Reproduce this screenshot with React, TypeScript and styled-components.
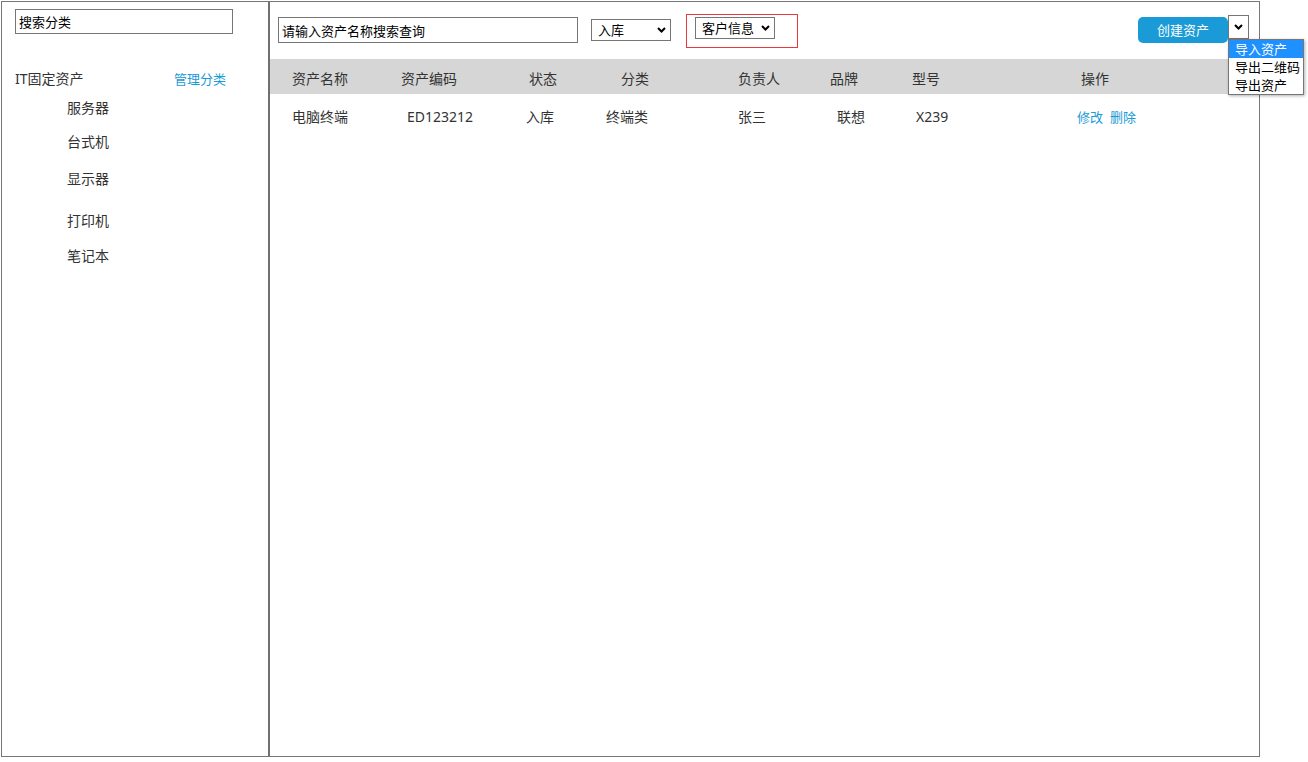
import React from "react";
import styled, { createGlobalStyle } from "styled-components";

const FONT = `"Noto Sans", "Noto Sans CJK SC", sans-serif`;

const GlobalStyle = createGlobalStyle`
  html, body { margin: 0; padding: 0; background: #fff; }
  body { font-family: ${FONT}; color: #333; }
  *, *::before, *::after { box-sizing: border-box; }
`;

const Page = styled.div`
  padding: 1px;
`;

const Frame = styled.div`
  width: 1259px;
  height: 756px;
  border: 1px solid #777;
  display: flex;
`;

const Sidebar = styled.aside`
  width: 268px;
  flex: none;
  border-right: 2px solid #707070;
  padding: 7px 0 0 13px;
  display: flex;
  flex-direction: column;
`;

const TextInput = styled.input<{ $w: number; $h: number; $mt?: number }>`
  width: ${(p) => p.$w}px;
  height: ${(p) => p.$h}px;
  margin: ${(p) => p.$mt ?? 0}px 0 0 0;
  flex: none;
  border: 1px solid #767676;
  border-radius: 0;
  padding: 0 3px;
  font: 13px/1 ${FONT};
  color: #000;
  background: #fff;
  outline: none;
`;

const CategoryHead = styled.div`
  width: 211px;
  margin-top: 35px;
  display: flex;
  justify-content: space-between;
  align-items: center;
  line-height: 20px;
  font-size: 14px;
  color: #333;
`;

const ManageLink = styled.span`
  font-size: 13px;
  color: #1a9ad6;
`;

const CategoryItem = styled.div<{ $mt: number }>`
  margin-top: ${(p) => p.$mt}px;
  padding-left: 52px;
  line-height: 20px;
  font-size: 14px;
  color: #333;
`;

const Main = styled.main`
  flex: 1;
  display: flex;
  flex-direction: column;
  min-width: 0;
`;

const Toolbar = styled.div`
  height: 57px;
  flex: none;
  display: flex;
  align-items: flex-start;
  padding: 0 10px 0 8px;
`;

const Select = styled.div<{ $ml?: number; $mt?: number }>`
  width: 80px;
  height: 22px;
  margin: ${(p) => p.$mt ?? 0}px 0 0 ${(p) => p.$ml ?? 0}px;
  flex: none;
  border: 1px solid #767676;
  background: #fff;
  display: flex;
  align-items: center;
  justify-content: space-between;
  padding: 0 4px 0 6px;
  font-size: 13px;
  line-height: 18px;
  color: #000;
`;

const HighlightBox = styled.div`
  margin: 12px 0 0 15px;
  width: 112px;
  height: 34px;
  border: 1px solid #e5393c;
  padding: 2px 0 0 8px;
  display: flex;
  align-items: flex-start;
`;

const ActionGroup = styled.div`
  margin-left: auto;
  display: flex;
  align-items: flex-start;
`;

const CreateButton = styled.button`
  margin-top: 15px;
  width: 90px;
  height: 26px;
  border: none;
  border-radius: 5px;
  background: #1a9bd7;
  color: #fff;
  font: 13px/26px ${FONT};
  padding: 0;
`;

const MenuToggle = styled.div`
  position: relative;
  margin-top: 13px;
  width: 21px;
  height: 24px;
  border: 1px solid #767676;
  background: #fff;
  display: flex;
  align-items: center;
  justify-content: center;
`;

const Dropdown = styled.ul`
  position: absolute;
  top: 23px;
  left: -1px;
  z-index: 10;
  width: 76px;
  margin: 0;
  padding: 0;
  list-style: none;
  background: #fff;
  border: 1px solid #767676;
  box-shadow: 1px 1px 3px rgba(0, 0, 0, 0.3);
`;

const DropdownItem = styled.li<{ $active?: boolean }>`
  height: 18px;
  line-height: 18px;
  padding-left: 6px;
  font-size: 13px;
  white-space: nowrap;
  color: ${(p) => (p.$active ? "#fff" : "#000")};
  background: ${(p) => (p.$active ? "#1e90ff" : "transparent")};
`;

const TableHead = styled.div`
  height: 35px;
  flex: none;
  background: #d6d6d6;
  display: flex;
  padding: 11px 0 0 22px;
  line-height: 18px;
  font-size: 14px;
  color: #333;
`;

const TableRow = styled.div`
  display: flex;
  padding: 13px 0 0 22px;
  line-height: 20px;
  font-size: 14px;
  color: #333;
`;

const Cell = styled.div<{ $w?: number }>`
  flex: ${(p) => (p.$w ? "none" : "1")};
  width: ${(p) => (p.$w ? `${p.$w}px` : "auto")};
  white-space: nowrap;
`;

const ActionLink = styled.span`
  font-size: 13px;
  color: #1a9ad6;
  margin-right: 7px;
`;

const Chevron = () => (
  <svg width="9" height="6" viewBox="0 0 9 6" aria-hidden="true">
    <path d="M1 1 L4.5 4.5 L8 1" fill="none" stroke="#000" strokeWidth="2" />
  </svg>
);

const headCols: [string, number | undefined][] = [
  ["资产名称", 109],
  ["资产编码", 128],
  ["状态", 92],
  ["分类", 117],
  ["负责人", 92],
  ["品牌", 82],
  ["型号", 169],
  ["操作", undefined],
];

const rowCols: [string, number][] = [
  ["电脑终端", 115],
  ["ED123212", 119],
  ["入库", 80],
  ["终端类", 132],
  ["张三", 99],
  ["联想", 79],
  ["X239", 161],
];

const categories: [string, number][] = [
  ["服务器", 9],
  ["台式机", 14],
  ["显示器", 17],
  ["打印机", 22],
  ["笔记本", 15],
];

export default function App() {
  return (
    <Page>
      <GlobalStyle />
      <Frame>
        <Sidebar>
          <TextInput $w={218} $h={25} defaultValue="搜索分类" />
          <CategoryHead>
            <span>IT固定资产</span>
            <ManageLink>管理分类</ManageLink>
          </CategoryHead>
          {categories.map(([name, mt]) => (
            <CategoryItem key={name} $mt={mt}>
              {name}
            </CategoryItem>
          ))}
        </Sidebar>
        <Main>
          <Toolbar>
            <TextInput $w={300} $h={26} $mt={15} defaultValue="请输入资产名称搜索查询" />
            <Select $ml={13} $mt={17}>
              <span>入库</span>
              <Chevron />
            </Select>
            <HighlightBox>
              <Select>
                <span>客户信息</span>
                <Chevron />
              </Select>
            </HighlightBox>
            <ActionGroup>
              <CreateButton>创建资产</CreateButton>
              <MenuToggle>
                <Chevron />
                <Dropdown>
                  <DropdownItem $active>导入资产</DropdownItem>
                  <DropdownItem>导出二维码</DropdownItem>
                  <DropdownItem>导出资产</DropdownItem>
                </Dropdown>
              </MenuToggle>
            </ActionGroup>
          </Toolbar>
          <TableHead>
            {headCols.map(([label, w]) => (
              <Cell key={label} $w={w}>
                {label}
              </Cell>
            ))}
          </TableHead>
          <TableRow>
            {rowCols.map(([v, w]) => (
              <Cell key={v} $w={w}>
                {v}
              </Cell>
            ))}
            <Cell>
              <ActionLink>修改</ActionLink>
              <ActionLink>删除</ActionLink>
            </Cell>
          </TableRow>
        </Main>
      </Frame>
    </Page>
  );
}
